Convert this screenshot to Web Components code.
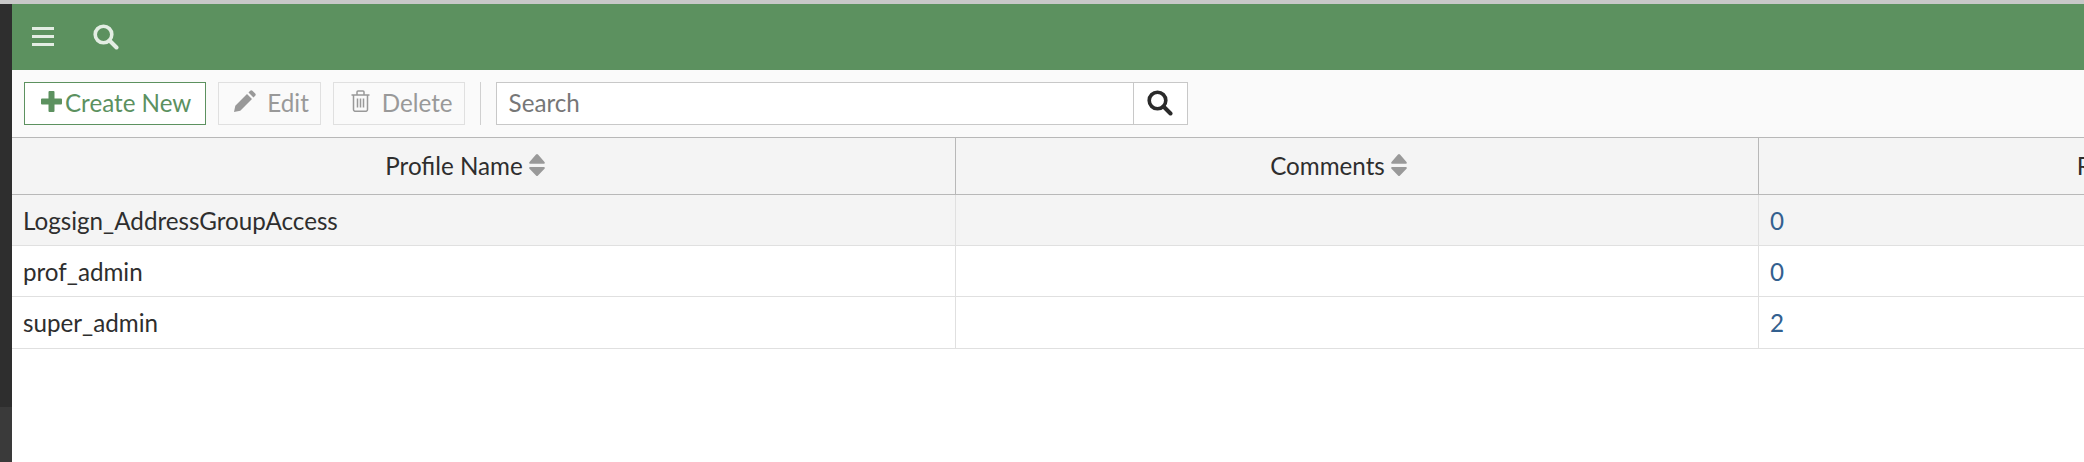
<!DOCTYPE html>
<html>
<head>
<meta charset="utf-8">
<title>Admin Profiles</title>
<style>
    html, body { margin: 0; height: 100%; overflow: hidden; background: #fff; }
    body { font-family: "Lato", "Liberation Sans", sans-serif; }
</style>
</head>
<body>
<admin-page></admin-page>

<script>
const ICONS = {
    bars: `<svg viewBox="0 0 22 20" width="22" height="20"><path d="M0 0h22v3H0zM0 8h22v3H0zM0 16h22v3H0z" fill="currentColor"/></svg>`,
    search: `<svg viewBox="0 0 26 26" width="26" height="26"><circle cx="10.500" cy="10.500" r="8.300" fill="none" stroke="currentColor" stroke-width="3.600"/><path d="M16.500 16.500l7 7" stroke="currentColor" stroke-width="4" stroke-linecap="round"/></svg>`,
    plus: `<svg viewBox="0 0 21 21" width="21" height="21"><path d="M7.500 1a1 1 0 0 1 1-1h4a1 1 0 0 1 1 1v6.500H20a1 1 0 0 1 1 1v4a1 1 0 0 1-1 1h-6.500V20a1 1 0 0 1-1 1h-4a1 1 0 0 1-1-1v-6.500H1a1 1 0 0 1-1-1v-4a1 1 0 0 1 1-1h6.500z" fill="currentColor"/></svg>`,
    pencil: `<svg viewBox="0 0 22 22" width="22" height="22"><path d="M0 22l1.300-6.300L13 4l5 5L6.300 20.700zM14.500 2.500l1.700-1.700a1.600 1.600 0 0 1 2.200 0l2.800 2.800a1.600 1.600 0 0 1 0 2.200L19.500 7.500z" fill="currentColor"/></svg>`,
    trash: `<svg viewBox="0 0 22 22" width="22" height="22"><path d="M2.500 5h18M8 5V2a1 1 0 0 1 1-1h5a1 1 0 0 1 1 1v3M4.500 5v14.500a1.800 1.800 0 0 0 1.800 1.800h10.400a1.800 1.800 0 0 0 1.800-1.800V5" fill="none" stroke="currentColor" stroke-width="1.500"/><path d="M8.500 8.500v9M11.500 8.500v9M14.500 8.500v9" stroke="currentColor" stroke-width="1.500"/></svg>`
};

class TopBar extends HTMLElement {
    constructor() {
        super();
        this.attachShadow({mode: "open"}).innerHTML = `
            <style>
                :host { display: flex; align-items: center; height: 66px; background: #5c915f; color: #e3ede3; box-sizing: border-box; padding: 0 0 0 20px; }
                .icon { display: flex; }
                .icon + .icon { margin-left: 39px; }
            </style>
            <span class="icon">${ICONS.bars}</span>
            <span class="icon">${ICONS.search}</span>`;
    }
}
customElements.define("top-bar", TopBar);

class ToolButton extends HTMLElement {
    constructor() {
        super();
        const icon = ICONS[this.getAttribute("icon")];
        this.attachShadow({mode: "open"}).innerHTML = `
            <style>
                :host { display: inline-flex; align-items: center; height: 43px; box-sizing: border-box; border: 1px solid #e0e0e0; background: #fafafa; color: #999; font-size: 24.200px; padding: 0 11px 2px 15px; gap: 11px; }
                :host([primary]) { border-color: #5c915f; background: #fff; color: #5c915f; gap: 3px; padding-left: 16px; padding-right: 14px; }
                svg { display: block; margin-bottom: 2px; }
            </style>
            ${icon}<slot></slot>`;
    }
}
customElements.define("tool-button", ToolButton);

class SearchBox extends HTMLElement {
    constructor() {
        super();
        this.attachShadow({mode: "open"}).innerHTML = `
            <style>
                :host { display: flex; width: 692px; height: 43px; box-sizing: border-box; border: 1px solid #c8c8c8; background: #fff; }
                .field { flex: 1; padding-left: 12px; font-size: 24.200px; line-height: 39px; color: #777; }
                .go { width: 53px; border-left: 1px solid #c8c8c8; display: flex; align-items: center; justify-content: center; color: #2a2a2a; }
            </style>
            <div class="field">Search</div>
            <div class="go">${ICONS.search}</div>`;
    }
}
customElements.define("search-box", SearchBox);

class ToolBar extends HTMLElement {
    constructor() {
        super();
        this.attachShadow({mode: "open"}).innerHTML = `
            <style>
                :host { display: flex; align-items: center; gap: 15px; height: 68px; box-sizing: border-box; padding: 0 0 1px 12px; background: #fafafa; border-bottom: 1px solid #b8b8b8; }
                .sep { width: 1px; height: 43px; background: #d0d0d0; }
            </style>
            <slot name="buttons"></slot>
            <span class="sep"></span>
            <slot name="search"></slot>`;
    }
}
customElements.define("tool-bar", ToolBar);

class SortArrows extends HTMLElement {
    constructor() {
        super();
        this.attachShadow({mode: "open"}).innerHTML = `
            <style>
                :host { display: inline-flex; margin-left: 6px; color: #999; }
            </style>
            <svg viewBox="0 0 16 22" width="16" height="22"><path d="M7 .6a1.400 1.400 0 0 1 2 0l6.500 7.400c.7.900.2 1.800-.9 1.800H1.400C.3 9.800-.2 8.900.5 8zM7 21.400a1.400 1.400 0 0 0 2 0l6.500-6.600c.7-.9.2-1.800-.9-1.800H1.400c-1.100 0-1.600.9-.9 1.800z" fill="currentColor"/></svg>`;
    }
}
customElements.define("sort-arrows", SortArrows);

class ProfileTable extends HTMLElement {
    constructor() {
        super();
        this.attachShadow({mode: "open"}).innerHTML = `
            <style>
                :host { display: block; }
                .row { display: grid; grid-template-columns: 944px 803px 736px; box-sizing: border-box; font-size: 24.200px; color: #2e2e2e; }
                .head { height: 57px; background: #f4f4f4; border-bottom: 1px solid #b8b8b8; }
                .head > div { display: flex; align-items: center; justify-content: center; border-right: 1px solid #b8b8b8; box-sizing: border-box; padding: 0 37px 2px 0; }
                .body { height: 51px; border-bottom: 1px solid #e0e0e0; background: #fff; }
                .body:last-child { height: 52px; }
                .body.sel { background: #f4f4f4; }
                .body > div { display: flex; align-items: center; padding-left: 11px; border-right: 1px solid #e0e0e0; box-sizing: border-box; }
                .ref { color: #33608f; }
            </style>
            <div class="row head">
                <div>Profile Name<sort-arrows></sort-arrows></div>
                <div>Comments<sort-arrows></sort-arrows></div>
                <div>Ref.<sort-arrows></sort-arrows></div>
            </div>
            <div class="row body sel"><div>Logsign_AddressGroupAccess</div><div></div><div class="ref">0</div></div>
            <div class="row body"><div>prof_admin</div><div></div><div class="ref">0</div></div>
            <div class="row body"><div>super_admin</div><div></div><div class="ref">2</div></div>`;
    }
}
customElements.define("profile-table", ProfileTable);

class AdminPage extends HTMLElement {
    constructor() {
        super();
        this.attachShadow({mode: "open"}).innerHTML = `
            <style>
                :host { display: block; height: 462px; overflow: hidden; background: #fff; border-top: 4px solid #c8c8c8; box-sizing: border-box; }
                .shell { display: flex; height: 100%; }
                .rail { flex: 0 0 12px; background: linear-gradient(#2e2e2e 0, #2e2e2e 403px, #3a3a3a 403px); }
                main { flex: 1; min-width: 0; overflow: hidden; }
                .buttons { display: flex; gap: 12px; }
            </style>
            <div class="shell">
                <div class="rail"></div>
                <main>
                    <top-bar></top-bar>
                    <tool-bar>
                        <div class="buttons" slot="buttons">
                            <tool-button icon="plus" primary>Create New</tool-button>
                            <tool-button icon="pencil">Edit</tool-button>
                            <tool-button icon="trash">Delete</tool-button>
                        </div>
                        <search-box slot="search"></search-box>
                    </tool-bar>
                    <profile-table></profile-table>
                </main>
            </div>`;
    }
}
customElements.define("admin-page", AdminPage);
</script>
</body>
</html>
